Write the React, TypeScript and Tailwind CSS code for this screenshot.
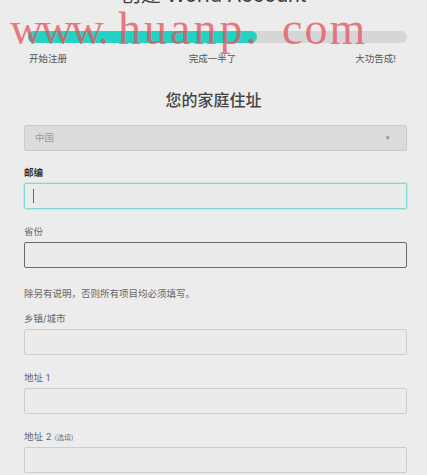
import React from 'react';

const sans = "font-['Inter','Noto_Sans_CJK_SC',sans-serif]";

function Field({ label, hint, bold, variant = 'plain', className = '' }: { label: string; hint?: string; bold?: boolean; variant?: 'plain' | 'focus' | 'dark'; className?: string }) {
    const border =
        variant === 'focus'
            ? 'border-[1.5px] border-[#7fdcd3] shadow-[0_0_0_1px_rgba(127,220,211,0.35)]'
            : variant === 'dark'
                ? 'border border-[#6a6a6a]'
                : 'border border-[#cdcdcd]';
    return (
        <div className={`flex flex-col gap-[3px] ${className}`}>
            <div className={`h-[14px] leading-[14px] text-[9.5px] ${bold ? 'font-bold text-[#333]' : 'text-[#666]'}`}>
                {label}
                {hint && <span className="ml-[3px] text-[7px] text-[#777]">{hint}</span>}
            </div>
            <div className={`h-[26px] rounded-[2px] bg-[#ebebeb] ${border} flex items-center pl-[8px]`}>
                {variant === 'focus' && <div className="w-px h-[14px] bg-[#666]" />}
            </div>
        </div>
    );
}

export default function App() {
    return (
        <div className={`relative min-h-[475px] w-full overflow-hidden bg-[#ececec] ${sans}`}>
            <h1 className="mt-[-17px] text-center text-[20px] leading-[24px] text-[#3c3c3c]">创建 World Account</h1>

            {/* progress */}
            <div className="ml-[28px] mr-[20px] mt-[24px] h-[12px] rounded-full bg-[#d6d6d6]">
                <div className="h-full w-[229px] rounded-full bg-[#22d3c4]" />
            </div>
            <div className="ml-[29px] mr-[31px] mt-[9px] grid grid-cols-3 text-[9.5px] leading-[14px] text-[#555]">
                <span className="text-left">开始注册</span>
                <span className="text-center">完成一半了</span>
                <span className="text-right">大功告成!</span>
            </div>

            <h2 className="mt-[24px] text-center text-[16px] leading-[20px] font-medium text-[#444]">您的家庭住址</h2>

            <div className="ml-[24px] mr-[20px] mt-[15px] flex flex-col">
                <div className="flex h-[26px] items-center justify-between rounded-[2px] border border-[#c9c9c9] bg-[#dcdcdc] pl-[10px] pr-[16px]">
                    <span className="text-[9.5px] text-[#9a9a9a]">中国</span>
                    <span className="text-[7px] text-[#888]">▾</span>
                </div>

                <Field label="邮编" bold variant="focus" className="mt-[15px]" />
                <Field label="省份" variant="dark" className="mt-[16px]" />

                <p className="mt-[19px] h-[14px] text-[9.5px] leading-[14px] text-[#666]">除另有说明，否则所有项目均必须填写。</p>

                <Field label="乡镇/城市" className="mt-[11px]" />
                <Field label="地址 1" className="mt-[16px]" />
                <Field label="地址 2" hint="(选填)" className="mt-[16px]" />
            </div>

            {/* watermark */}
            <div className="pointer-events-none absolute left-0 top-[6px] h-[46px] w-full font-['Liberation_Serif',serif] text-[46px] leading-[46px] text-[#e4535d]/75">
                <span className="absolute left-[10px] tracking-[-3px]">www.</span>
                <span className="absolute left-[118px] tracking-[3px]">huanp.</span>
                <span className="absolute left-[282px] tracking-[2px]">com</span>
            </div>
        </div>
    );
}
